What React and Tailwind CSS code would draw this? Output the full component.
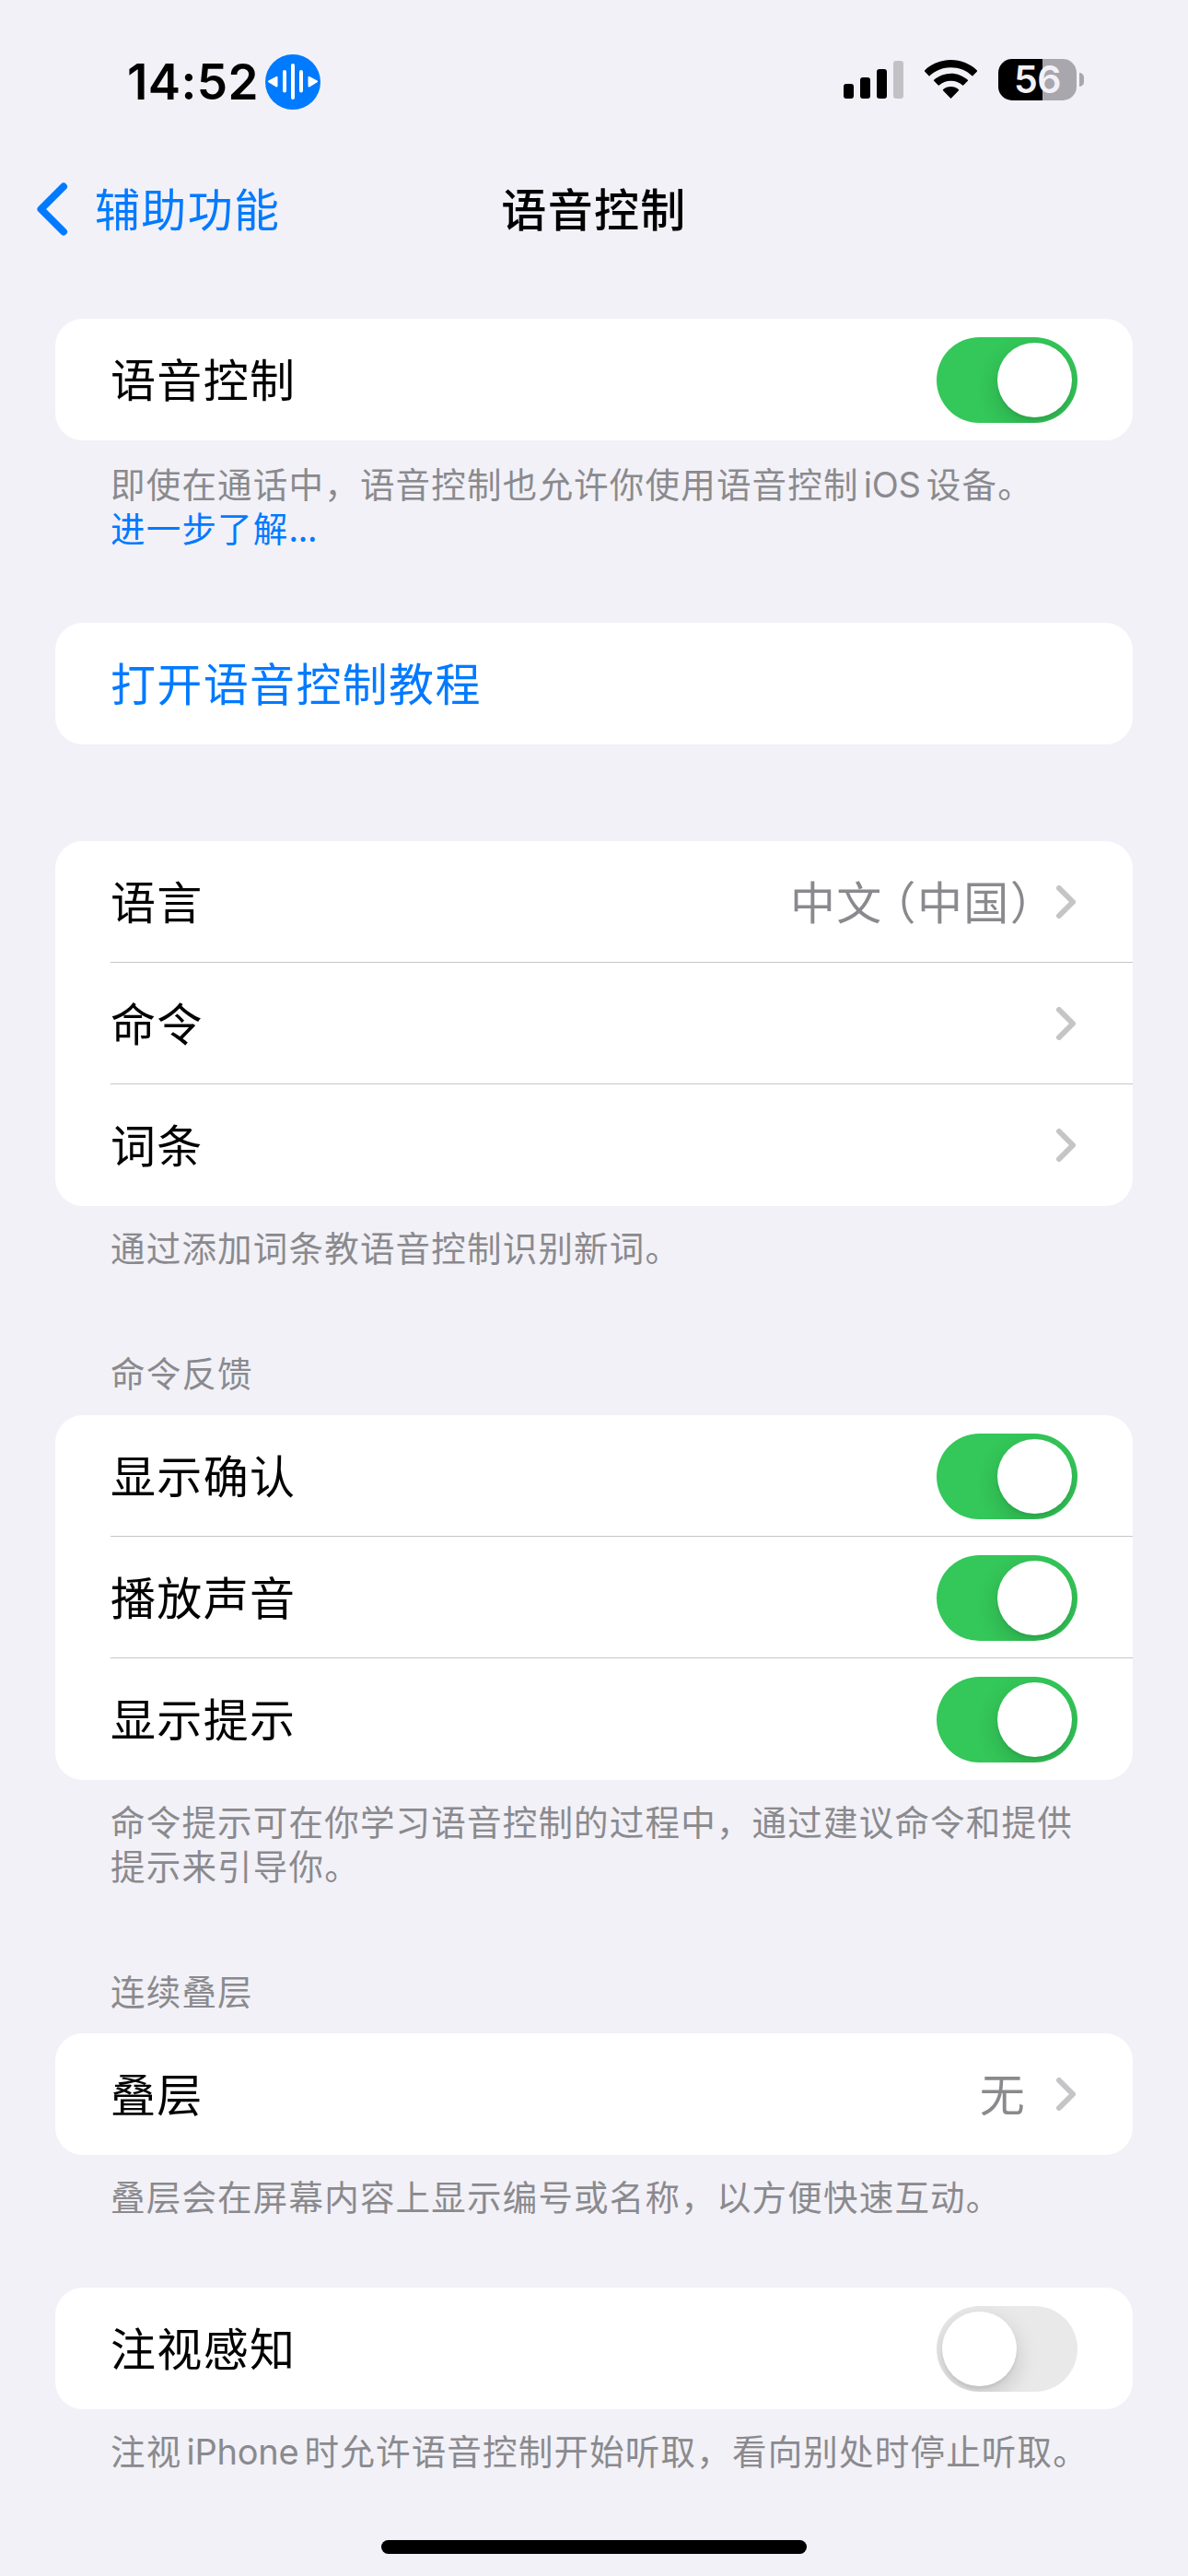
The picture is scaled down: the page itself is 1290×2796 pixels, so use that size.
import React, { useState } from 'react';
import clsx from 'clsx';

const StatusBar = () => (
  <div className="h-[178px] shrink-0 flex justify-between pl-[138px] pr-[113px]">
    <div className="flex h-[178px] items-center">
      <span className="w-[150px] font-['Inter',sans-serif] text-[53px] font-semibold leading-none tracking-[0.4px] whitespace-nowrap">14:52</span>
      <svg width="60" height="60" viewBox="0 0 60 60">
        <circle cx="30" cy="30" r="30" fill="#007aff" />
        <g fill="none" stroke="#fff" strokeWidth="4" strokeLinecap="round">
          <path d="M30 12v35M21 19v20.500M39 19v20.500" />
        </g>
        <path
          d="M4 29.500 12.500 24.800v9.800ZM56 29.500 47.500 24.800v9.800Z"
          fill="#fff"
          stroke="#fff"
          strokeWidth="2"
          strokeLinejoin="round"
        />
      </svg>
    </div>

    <div className="flex items-start pt-16">
      <svg width="65" height="43" viewBox="0 0 65 43">
        <rect x="0" y="27" width="11" height="16" rx="3" />
        <rect x="18" y="20" width="11" height="23" rx="3" />
        <rect x="36" y="11" width="11" height="32" rx="3" />
        <rect x="54" y="2" width="11" height="41" rx="3" fill="#c2c1c6" />
      </svg>
      <svg className="ml-[23px]" width="57" height="43" viewBox="0 0 57 43">
        <path d="M28.500 1C39.500 1 49.500 5.300 57 12.400c.3.300.3.700 0 1L52.400 18.200c-.3.300-.7.300-1 0C45.300 12.500 37.300 9.300 28.500 9.300S11.700 12.500 5.600 18.200c-.3.300-.7.300-1 0L0 13.400c-.3-.3-.3-.7 0-1C7.500 5.300 17.500 1 28.500 1Z" />
        <path d="M28.500 15.700c7 0 13.500 2.700 18.400 7.100.3.300.3.700 0 1L42.200 28.500c-.3.300-.7.300-1 0-3.400-3-7.800-4.700-12.700-4.700s-9.300 1.700-12.700 4.700c-.3.300-.7.300-1 0L10.100 23.800c-.3-.3-.3-.7 0-1 4.900-4.400 11.400-7.100 18.400-7.100Z" />
        <path d="M28.500 30c3.200 0 6.200 1.200 8.500 3.200.3.300.3.700 0 1l-8 8.400c-.3.300-.7.300-1 0l-8-8.400c-.3-.3-.3-.7 0-1 2.300-2 5.300-3.200 8.500-3.200Z" />
      </svg>
      <div className="ml-[23px] flex items-center">
        <div className="flex h-[45px] w-[85px] items-center justify-center rounded-[15px] bg-linear-to-r from-black from-[48px] to-[#a8a7ad] to-[48px] font-['Inter',sans-serif] text-[41px] font-semibold leading-none tracking-[-0.5px] text-[#f2f1f7]">
          56
        </div>
        <div className="ml-[3px] h-[15px] w-[5px] rounded-r-full bg-[#a8a7ad]" />
      </div>
    </div>
  </div>
);

const NavBar = () => (
  <div className="h-[98px] shrink-0 grid grid-cols-[1fr_auto_1fr] items-center pl-10">
    <button className="flex items-center text-[#007aff]">
      <svg width="34" height="58" viewBox="0 0 34 58" fill="none" stroke="currentColor" strokeWidth="8" strokeLinecap="round" strokeLinejoin="round">
        <path d="M29 4.500 4.500 29 29 53.500" />
      </svg>
      <span className="ml-[29px] -mt-1 leading-[60px]">辅助功能</span>
    </button>
    <h1 className="-ml-10 -mt-1 font-medium leading-[60px]">语音控制</h1>
    <span />
  </div>
);

const Toggle = ({ on, onChange }) => (
  <button
    role="switch"
    aria-checked={on}
    onClick={() => onChange(!on)}
    className={clsx(
      'mt-px flex h-[93px] w-[153px] items-center overflow-hidden rounded-full p-1.5',
      on ? 'justify-end bg-[#34c759]' : 'justify-start bg-[#e9e9ea]'
    )}
  >
    <span className="size-[81px] rounded-full bg-white shadow-[0_9px_24px_rgba(0,0,0,0.16),0_3px_3px_rgba(0,0,0,0.06)]" />
  </button>
);

const Chevron = () => (
  <svg className="mr-0.5" width="21" height="36" viewBox="0 0 21 36" fill="none" stroke="#c5c5c7" strokeWidth="6" strokeLinecap="round" strokeLinejoin="round">
    <path d="M3 3l15 15L3 33" />
  </svg>
);

const Card = ({ children }) => (
  <div className="flex flex-col overflow-hidden rounded-[30px] bg-white pl-[60px]">{children}</div>
);

const Row = ({ label, link, divider, children }) => (
  <div className={clsx('flex h-[132px] items-center justify-between pr-[60px]', divider && 'border-b border-[#c6c6c8]')}>
    <span className={clsx('-mt-1 leading-[60px]', link && 'text-[#007aff]')}>{label}</span>
    {children}
  </div>
);

const Value = ({ children }) => (
  <div className="flex items-center gap-[33px]">
    {children && <span className="-mt-1 leading-[60px] whitespace-nowrap text-[#8a8a8e]">{children}</span>}
    <Chevron />
  </div>
);

const Note = ({ children, className }) => (
  <div className={clsx('px-[60px] text-[37.5px] leading-[48px] tracking-[1.2px] text-[#8a8a8e] whitespace-nowrap', className)}>
    {children}
  </div>
);

const Latin = ({ children }) => (
  <span className="ml-[5px] mr-1.5 font-['Inter',sans-serif] text-[38px] leading-none tracking-[-0.2px]">{children}</span>
);

const App = () => {
  const [settings, setSettings] = useState({
    voice: true,
    confirm: true,
    sound: true,
    hints: true,
    attention: false,
  });

  const bind = (key) => ({
    on: settings[key],
    onChange: (value) => setSettings({ ...settings, [key]: value }),
  });

  return (
    <div className="flex h-[2796px] w-[1290px] flex-col overflow-hidden bg-[#f2f1f7] font-['Noto_Sans_CJK_SC',sans-serif] text-[49px] tracking-[1.350px] text-black">
      <StatusBar />
      <NavBar />

      <main className="flex flex-1 flex-col px-[60px] pt-[70px]">
        <section className="h-[330px]">
          <Card>
            <Row label="语音控制">
              <Toggle {...bind('voice')} />
            </Row>
          </Card>
          <Note className="pt-[22px]">
            即使在通话中，语音控制也允许你使用语音控制<Latin>iOS</Latin>设备。
            <br />
            <a className="text-[#007aff]">
              进一步了解<span className="tracking-[-0.2px]">...</span>
            </a>
          </Note>
        </section>

        <section className="h-[237px]">
          <Card>
            <Row label="打开语音控制教程" link />
          </Card>
        </section>

        <section className="h-[545px]">
          <Card>
            <Row label="语言" divider>
              <Value>
                中文<span className="-ml-[13px] -mr-[33px]">（中国）</span>
              </Value>
            </Row>
            <Row label="命令" divider>
              <Value />
            </Row>
            <Row label="词条">
              <Value />
            </Row>
          </Card>
          <Note className="pt-5">通过添加词条教语音控制识别新词。</Note>
        </section>

        <section className="h-[671px]">
          <Note className="h-[78px] pt-[7px]">命令反馈</Note>
          <Card>
            <Row label="显示确认" divider>
              <Toggle {...bind('confirm')} />
            </Row>
            <Row label="播放声音" divider>
              <Toggle {...bind('sound')} />
            </Row>
            <Row label="显示提示">
              <Toggle {...bind('hints')} />
            </Row>
          </Card>
          <Note className="pt-5">
            命令提示可在你学习语音控制的过程中，通过建议命令和提供
            <br />
            提示来引导你。
          </Note>
        </section>

        <section className="h-[354px]">
          <Note className="h-[78px] pt-[7px]">连续叠层</Note>
          <Card>
            <Row label="叠层">
              <Value>无</Value>
            </Row>
          </Card>
          <Note className="pt-5">叠层会在屏幕内容上显示编号或名称，以方便快速互动。</Note>
        </section>

        <section>
          <Card>
            <Row label="注视感知">
              <Toggle {...bind('attention')} />
            </Row>
          </Card>
          <Note className="pt-5">
            注视<Latin>iPhone</Latin>时允许语音控制开始听取，看向别处时停止听取。
          </Note>
        </section>
      </main>

      <div className="mb-6 h-[15px] w-[462px] shrink-0 self-center rounded-full bg-black" />
    </div>
  );
};

export default App;
